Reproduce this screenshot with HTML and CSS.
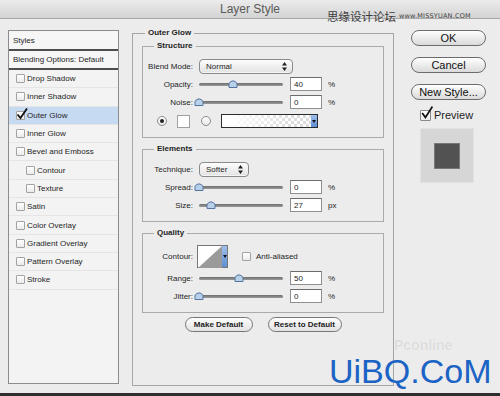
FILE: index.html
```html
<!DOCTYPE html>
<html lang="en">
<head>
  <meta charset="UTF-8" />
  <title>Layer Style</title>
  <link rel="stylesheet" href="styles.css">
</head>
<body>
  <div class="window">
    <div class="titlebar">Layer Style</div>
    <div class="site-mark">思缘设计论坛 <span>www.MISSYUAN.COM</span></div>

    <div class="content">
      <div class="styles-list">
        <div class="list-head">Styles</div>
        <div class="list-head">Blending Options: Default</div>
        <div class="list-item"><span class="cb"></span>Drop Shadow</div>
        <div class="list-item"><span class="cb"></span>Inner Shadow</div>
        <div class="list-item active"><span class="cb checked"><svg viewBox="0 0 12 12" width="12" height="12"><path d="M1.5 6.5 L4.5 10 L11 0.5" fill="none" stroke="#111" stroke-width="1.8"/></svg></span>Outer Glow</div>
        <div class="list-item"><span class="cb"></span>Inner Glow</div>
        <div class="list-item"><span class="cb"></span>Bevel and Emboss</div>
        <div class="list-item sub"><span class="cb"></span>Contour</div>
        <div class="list-item sub"><span class="cb"></span>Texture</div>
        <div class="list-item"><span class="cb"></span>Satin</div>
        <div class="list-item"><span class="cb"></span>Color Overlay</div>
        <div class="list-item"><span class="cb"></span>Gradient Overlay</div>
        <div class="list-item"><span class="cb"></span>Pattern Overlay</div>
        <div class="list-item"><span class="cb"></span>Stroke</div>
      </div>

      <fieldset class="panel">
        <legend>Outer Glow</legend>

        <fieldset class="group">
          <legend>Structure</legend>
          <div class="row">
            <label>Blend Mode:</label>
            <div class="select blend">Normal<svg class="arrows" viewBox="0 0 5 9" width="5" height="9"><path d="M2.5 0 L5 3.5 H0 Z M2.5 9 L5 5.5 H0 Z" fill="#222"/></svg></div>
          </div>
          <div class="row">
            <label>Opacity:</label>
            <div class="slider"><svg class="thumb" style="left:40%" viewBox="0 0 10 9" width="10" height="9"><path d="M1 8.5 V4.2 Q5 -0.5 9 4.2 V8.5 Z" fill="#b9d0ea" stroke="#55759e" stroke-width="1"/></svg></div>
            <input class="num" type="text" value="40"><span class="unit">%</span>
          </div>
          <div class="row">
            <label>Noise:</label>
            <div class="slider"><svg class="thumb" style="left:0%" viewBox="0 0 10 9" width="10" height="9"><path d="M1 8.5 V4.2 Q5 -0.5 9 4.2 V8.5 Z" fill="#b9d0ea" stroke="#55759e" stroke-width="1"/></svg></div>
            <input class="num" type="text" value="0"><span class="unit">%</span>
          </div>
          <div class="row color-row">
            <span class="radio on"></span>
            <span class="swatch"></span>
            <span class="radio"></span>
            <span class="gradient"><span class="drop"></span></span>
          </div>
        </fieldset>

        <fieldset class="group">
          <legend>Elements</legend>
          <div class="row">
            <label>Technique:</label>
            <div class="select technique">Softer<svg class="arrows" viewBox="0 0 5 9" width="5" height="9"><path d="M2.5 0 L5 3.5 H0 Z M2.5 9 L5 5.5 H0 Z" fill="#222"/></svg></div>
          </div>
          <div class="row">
            <label>Spread:</label>
            <div class="slider"><svg class="thumb" style="left:0%" viewBox="0 0 10 9" width="10" height="9"><path d="M1 8.5 V4.2 Q5 -0.5 9 4.2 V8.5 Z" fill="#b9d0ea" stroke="#55759e" stroke-width="1"/></svg></div>
            <input class="num" type="text" value="0"><span class="unit">%</span>
          </div>
          <div class="row">
            <label>Size:</label>
            <div class="slider"><svg class="thumb" style="left:14%" viewBox="0 0 10 9" width="10" height="9"><path d="M1 8.5 V4.2 Q5 -0.5 9 4.2 V8.5 Z" fill="#b9d0ea" stroke="#55759e" stroke-width="1"/></svg></div>
            <input class="num" type="text" value="27"><span class="unit">px</span>
          </div>
        </fieldset>

        <fieldset class="group">
          <legend>Quality</legend>
          <div class="row contour-row">
            <label>Contour:</label>
            <div class="contour">
              <svg viewBox="0 0 24 22" width="24" height="22"><path d="M0 22 L24 0 V22 Z" fill="#9a9a9a"/></svg>
              <span class="drop"></span>
            </div>
            <span class="cb anti"></span><span class="anti-label">Anti-aliased</span>
          </div>
          <div class="row">
            <label>Range:</label>
            <div class="slider"><svg class="thumb" style="left:48%" viewBox="0 0 10 9" width="10" height="9"><path d="M1 8.5 V4.2 Q5 -0.5 9 4.2 V8.5 Z" fill="#b9d0ea" stroke="#55759e" stroke-width="1"/></svg></div>
            <input class="num" type="text" value="50"><span class="unit">%</span>
          </div>
          <div class="row">
            <label>Jitter:</label>
            <div class="slider"><svg class="thumb" style="left:0%" viewBox="0 0 10 9" width="10" height="9"><path d="M1 8.5 V4.2 Q5 -0.5 9 4.2 V8.5 Z" fill="#b9d0ea" stroke="#55759e" stroke-width="1"/></svg></div>
            <input class="num" type="text" value="0"><span class="unit">%</span>
          </div>
        </fieldset>

        <div class="defaults">
          <button class="pill make">Make Default</button>
          <button class="pill reset">Reset to Default</button>
        </div>
      </fieldset>

      <div class="actions">
        <button class="btn">OK</button>
        <button class="btn">Cancel</button>
        <button class="btn">New Style...</button>
        <div class="preview-check"><span class="cb big"><svg viewBox="0 0 12 12" width="13" height="13"><path d="M2 6.5 L5 10.5 L11.5 0.5" fill="none" stroke="#111" stroke-width="1.6"/></svg></span>Preview</div>
        <div class="preview-box"><span class="preview-square"></span></div>
      </div>
    </div>

    <div class="pc-mark">Pconline</div>
    <div class="uibq-mark">UiBQ.CoM</div>
  </div>
</body>
</html>
```

FILE: styles.css
```css
* {
  box-sizing: border-box;
}

body {
  margin: 0;
  width: 500px;
  height: 396px;
  overflow: hidden;
  font-family: "Liberation Sans", Arial, sans-serif;
  font-size: 8px;
  color: #1e1e1e;
  background: #ececec;
}

.window {
  position: relative;
  height: 396px;
  border-bottom: 3px solid #2e2e2e;
  background: #ececec;
}

.titlebar {
  height: 19px;
  line-height: 19px;
  text-align: center;
  font-size: 12px;
  color: #5a5a5a;
  background: linear-gradient(#ececec, #d3d3d3);
  border-bottom: 1px solid #a8a8a8;
}

.site-mark {
  position: absolute;
  top: 10px;
  left: 327px;
  display: flex;
  align-items: center;
  gap: 3px;
  font-family: "Noto Sans CJK SC", sans-serif;
  font-size: 11.5px;
  line-height: 13px;
  color: #3c3c3c;
}

.site-mark span {
  font-family: "DejaVu Sans", sans-serif;
  font-size: 6.5px;
  letter-spacing: 0.2px;
  color: #444;
}

.content {
  display: flex;
  align-items: flex-start;
  padding: 11px 0 0 8px;
}

/* styles list */
.styles-list {
  width: 111px;
  height: 354px;
  border: 1px solid #8c8c8c;
  background: #f3f3f3;
  flex: none;
}

.list-head {
  height: 20px;
  padding-left: 4px;
  display: flex;
  align-items: center;
  border-bottom: 2px solid #4e4e4e;
  background: #f6f6f6;
}

.list-head + .list-head {
  height: 19px;
}

.list-item {
  height: 18.3px;
  display: flex;
  align-items: center;
  gap: 2px;
  padding-left: 7px;
  border-bottom: 1px solid #e5e5e5;
}

.list-item.sub {
  padding-left: 17px;
}

.list-item.active {
  background: #c6daf2;
}

.cb {
  position: relative;
  width: 9px;
  height: 9px;
  flex: none;
  border: 1px solid #a3a3a3;
  border-radius: 1px;
  background: linear-gradient(#fff, #ebebeb);
}

.cb svg {
  position: absolute;
  left: -1px;
  top: -4px;
}

/* main panel */
fieldset {
  margin: 0;
  min-width: 0;
}

legend {
  font-weight: bold;
  line-height: 10px;
  padding: 0 3px;
}

.panel {
  width: 262px;
  height: 358px;
  margin: -2px 0 0 13px;
  padding: 3px 9px 0;
  border: 1px solid #a6a6a6;
  flex: none;
}

.panel > legend {
  margin-left: 3px;
}

.group {
  padding: 0 0 8px;
  border: 1px solid #aaa;
}

.group > legend {
  margin-left: 11px;
}

.group + .group {
  margin-top: 6px;
}

.row {
  display: flex;
  align-items: center;
  height: 16px;
  margin-top: 2px;
}

.group > legend + .row {
  margin-top: 7px;
}

.row label {
  width: 50px;
  margin-right: 6px;
  text-align: right;
  flex: none;
}

.select {
  display: flex;
  align-items: center;
  justify-content: space-between;
  height: 15px;
  padding: 0 5px 0 6px;
  border: 1px solid #8a8a8a;
  border-radius: 4px;
  background: linear-gradient(#fdfdfd, #e2e2e2);
  box-shadow: inset 0 -1px 0 #f4f4f4;
}

.select.blend {
  width: 94px;
}

.select.technique {
  width: 50px;
}

.slider {
  position: relative;
  width: 84px;
  height: 16px;
  flex: none;
}

.slider::before {
  content: "";
  position: absolute;
  left: 0;
  right: 0;
  top: 7px;
  height: 3px;
  border-radius: 2px;
  background: linear-gradient(#6e6e6e, #9a9a9a);
}

.thumb {
  position: absolute;
  top: 3px;
  margin-left: -5px;
}

.num {
  width: 32px;
  height: 14px;
  margin: 0 0 0 7px;
  padding: 0 3px;
  border: 1px solid #8f8f8f;
  border-top-color: #6c6c6c;
  background: #fff;
  font: 8px "Liberation Sans", Arial, sans-serif;
  color: #1e1e1e;
}

.unit {
  margin-left: 6px;
}

.color-row {
  margin-top: 3px;
  padding-left: 14px;
}

.radio {
  width: 10px;
  height: 10px;
  border: 1px solid #8c8c8c;
  border-radius: 50%;
  background: linear-gradient(#fff, #e6e6e6);
  display: flex;
  align-items: center;
  justify-content: center;
  flex: none;
}

.radio.on::after {
  content: "";
  width: 4px;
  height: 4px;
  border-radius: 50%;
  background: #222;
}

.swatch {
  width: 13px;
  height: 13px;
  margin: 0 11px 0 10px;
  border: 1px solid #a0a0a0;
  background: #fff;
}

.gradient {
  display: flex;
  justify-content: flex-end;
  width: 97px;
  height: 14px;
  margin-left: 10px;
  border: 1px solid #2c2c2c;
  background:
    linear-gradient(to right, #fff 5%, rgba(255, 255, 255, 0) 75%),
    repeating-conic-gradient(#dcdcdc 0 25%, #fff 0 50%) 0 0 / 6px 6px;
}

.drop {
  width: 6px;
  height: 100%;
  background: linear-gradient(#9fc0ec, #5d8ed2);
  display: flex;
  align-items: center;
  justify-content: center;
}

.drop::after {
  content: "";
  border-left: 2px solid transparent;
  border-right: 2px solid transparent;
  border-top: 3px solid #111;
}

.contour-row {
  height: 23px;
}

.contour {
  display: flex;
  width: 31px;
  height: 23px;
  margin-left: -2px;
  border: 1px solid #777;
  background: #fff;
}

.contour svg {
  flex: none;
}

.cb.anti {
  margin-left: 14px;
}

.anti-label {
  margin-left: 5px;
}

.defaults {
  display: flex;
  justify-content: center;
  gap: 15px;
  margin-top: 4px;
}

.pill {
  height: 15px;
  padding: 0;
  border: 1px solid #767676;
  border-radius: 8px;
  background: linear-gradient(#fefefe, #e2e2e2);
  font: bold 8px "Liberation Sans", Arial, sans-serif;
  color: #222;
}

.pill.make {
  width: 68px;
}

.pill.reset {
  width: 74px;
}

/* right column */
.actions {
  display: flex;
  flex-direction: column;
  gap: 11px;
  width: 75px;
  margin-left: 17px;
  flex: none;
}

.btn {
  height: 16px;
  padding: 0;
  border: 1px solid #6c6c6c;
  border-radius: 8px;
  background: linear-gradient(#fefefe, #dadada);
  box-shadow: inset 0 1px 0 #fff;
  font: 11px "Liberation Sans", Arial, sans-serif;
  color: #111;
}

.preview-check {
  display: flex;
  align-items: center;
  gap: 3px;
  margin: -2px 0 0 9px;
  font-size: 11px;
  line-height: 13px;
}

.cb.big {
  width: 11px;
  height: 11px;
  border-color: #8a8a8a;
}

.cb.big svg {
  top: -5px;
}

.preview-box {
  display: flex;
  align-items: center;
  justify-content: center;
  width: 54px;
  height: 55px;
  margin: -5px 0 0 9px;
  border: 1px solid #e2e2e2;
  background: #d6d6d6;
}

.preview-square {
  width: 26px;
  height: 26px;
  border: 1px solid #777;
  background: #525252;
}

/* watermarks */
.pc-mark {
  position: absolute;
  left: 394px;
  top: 338px;
  font: bold 14px "Liberation Sans", Arial, sans-serif;
  line-height: 15px;
  color: #dcdcdc;
  text-shadow: 0 0 1px #fff;
}

.uibq-mark {
  position: absolute;
  left: 329px;
  top: 356px;
  font: 34px "Liberation Sans", Arial, sans-serif;
  line-height: 30px;
  color: #1b63c4;
}
```
